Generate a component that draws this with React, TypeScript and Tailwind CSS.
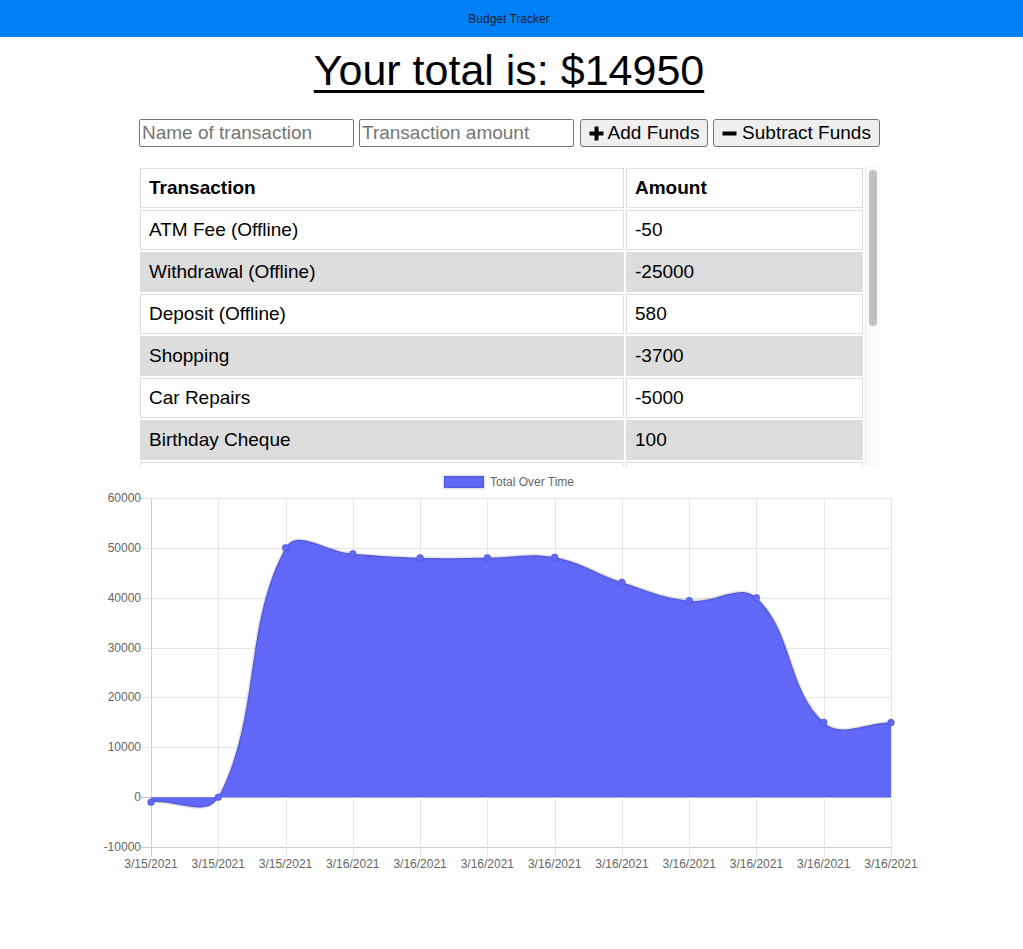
import React from "react";

type Pt = { x: number; y: number };

const values = [-1000, 0, 50000, 48800, 48000, 48020, 48120, 43120, 39420, 40000, 15000, 14950];
const labels = [
  "3/15/2021", "3/15/2021", "3/15/2021", "3/16/2021", "3/16/2021", "3/16/2021",
  "3/16/2021", "3/16/2021", "3/16/2021", "3/16/2021", "3/16/2021", "3/16/2021",
];
const LEFT = 151;
const RIGHT = 891;
const TOP = 498;
const BOTTOM = 847;
const xOf = (i: number) => LEFT + (i * (RIGHT - LEFT)) / 11;
const yOf = (v: number) => TOP + ((60000 - v) * (BOTTOM - TOP)) / 70000;

function buildPath() {
  const pts: Pt[] = values.map((v, i) => ({ x: xOf(i), y: yOf(v) }));
  const t = 0.4;
  const cps = pts.map((cur, i) => {
    const prev = pts[i - 1] || cur;
    const next = pts[i + 1] || cur;
    const d01 = Math.hypot(cur.x - prev.x, cur.y - prev.y);
    const d12 = Math.hypot(next.x - cur.x, next.y - cur.y);
    let s01 = d01 / (d01 + d12);
    let s12 = d12 / (d01 + d12);
    if (isNaN(s01)) s01 = 0;
    if (isNaN(s12)) s12 = 0;
    const fa = t * s01;
    const fb = t * s12;
    const clampX = (x: number) => Math.max(LEFT, Math.min(RIGHT, x));
    const clampY = (y: number) => Math.max(TOP, Math.min(BOTTOM, y));
    return {
      px: clampX(cur.x - fa * (next.x - prev.x)),
      py: clampY(cur.y - fa * (next.y - prev.y)),
      nx: clampX(cur.x + fb * (next.x - prev.x)),
      ny: clampY(cur.y + fb * (next.y - prev.y)),
    };
  });
  let d = `M${pts[0].x.toFixed(2)} ${pts[0].y.toFixed(2)}`;
  for (let i = 1; i < pts.length; i++) {
    d += ` C${cps[i - 1].nx.toFixed(2)} ${cps[i - 1].ny.toFixed(2)} ${cps[i].px.toFixed(2)} ${cps[i].py.toFixed(2)} ${pts[i].x.toFixed(2)} ${pts[i].y.toFixed(2)}`;
  }
  return { d, pts };
}

const { d: linePath, pts } = buildPath();
const zeroY = yOf(0);
const fillPath = `${linePath} L${RIGHT} ${zeroY} L${LEFT} ${zeroY} Z`;

const FILL = "#6167f6";

function Chart() {
  const yTicks = [60000, 50000, 40000, 30000, 20000, 10000, 0, -10000];
  return (
    <svg
      width={840}
      height={414}
      viewBox="89 466 840 414"
      className="block mx-auto"
      style={{ fontFamily: '"Liberation Sans", Arial, sans-serif' }}
    >
      {/* legend */}
      <rect x={444} y={476} width={40} height={12} fill={FILL} stroke="rgba(0,0,0,0.1)" strokeWidth={3} />
      <text x={490} y={486} fontSize={12} fill="#666">Total Over Time</text>

      {/* horizontal grid */}
      {yTicks.map((v) => (
        <line
          key={"h" + v}
          x1={LEFT - 10}
          x2={RIGHT}
          y1={Math.round(yOf(v)) + 0.5}
          y2={Math.round(yOf(v)) + 0.5}
          stroke={v === 0 ? "#bfbfbf" : v === -10000 ? "#cfcfcf" : "#e6e6e6"}
          strokeWidth={1}
        />
      ))}
      {/* vertical grid */}
      {values.map((_, i) => (
        <line
          key={"v" + i}
          x1={Math.round(xOf(i)) + 0.5}
          x2={Math.round(xOf(i)) + 0.5}
          y1={TOP}
          y2={BOTTOM + 10}
          stroke={i === 0 ? "#cfcfcf" : "#e6e6e6"}
          strokeWidth={1}
        />
      ))}

      {/* y labels */}
      {yTicks.map((v) => (
        <text key={"yl" + v} x={141} y={yOf(v) + 4} fontSize={12} fill="#666" textAnchor="end">
          {v}
        </text>
      ))}
      {/* x labels */}
      {labels.map((l, i) => (
        <text key={"xl" + i} x={xOf(i)} y={868} fontSize={12} fill="#666" textAnchor="middle">
          {l}
        </text>
      ))}

      {/* area */}
      <path d={fillPath} fill={FILL} />
      <path d={linePath} fill="none" stroke="rgba(0,0,0,0.1)" strokeWidth={3} />
      {pts.map((p, i) => (
        <circle key={"p" + i} cx={p.x} cy={p.y} r={3.5} fill={FILL} stroke="rgba(0,0,0,0.12)" strokeWidth={1} />
      ))}
    </svg>
  );
}

const rows: [string, string][] = [
  ["ATM Fee (Offline)", "-50"],
  ["Withdrawal (Offline)", "-25000"],
  ["Deposit (Offline)", "580"],
  ["Shopping", "-3700"],
  ["Car Repairs", "-5000"],
  ["Birthday Cheque", "100"],
  ["", ""],
];

function PlusIcon() {
  return (
    <svg width="15" height="15" viewBox="0 0 15 15" className="shrink-0">
      <rect x="5.5" y="0.5" width="4" height="14" fill="#000" />
      <rect x="0.5" y="5.5" width="14" height="4" fill="#000" />
    </svg>
  );
}

function MinusIcon() {
  return (
    <svg width="15" height="15" viewBox="0 0 15 15" className="shrink-0">
      <rect x="0.5" y="5.5" width="14" height="4" fill="#000" />
    </svg>
  );
}

export default function App() {
  return (
    <div
      className="min-h-[949px] bg-white text-black"
      style={{ fontFamily: '"Liberation Sans", Arial, sans-serif' }}
    >
      <div className="h-[37px] bg-[#0080f7] w-full">
        <div className="w-[1018px] h-full flex items-center justify-center text-[12px] text-[#1c1c2a]">
          Budget Tracker
        </div>
      </div>
      <div className="w-[1018px]">
        <h1 className="mt-[9px] text-center text-[43px] leading-[48px] underline decoration-[3px] underline-offset-[5px]">
          Your total is: $14950
        </h1>

        <div className="mt-[25px] mx-auto w-[742px] flex items-center pl-px">
          <input
            placeholder="Name of transaction"
            className="w-[215px] h-[28px] border border-[#767676] rounded-[2px] px-[2px] text-[19px] placeholder:text-[#757575] outline-none"
          />
          <input
            placeholder="Transaction amount"
            className="ml-[5px] w-[215px] h-[28px] border border-[#767676] rounded-[2px] px-[2px] text-[19px] placeholder:text-[#757575] outline-none"
          />
          <button className="ml-[6px] w-[128px] h-[28px] border border-[#767676] rounded-[3px] bg-[#efefef] flex items-center justify-center gap-[4px] text-[19px]">
            <PlusIcon />
            <span>Add Funds</span>
          </button>
          <button className="ml-[5px] w-[167px] h-[28px] border border-[#767676] rounded-[3px] bg-[#efefef] flex items-center justify-center gap-[5px] text-[19px]">
            <MinusIcon />
            <span>Subtract Funds</span>
          </button>
        </div>

        <div className="mt-[19px] mx-auto w-[742px] h-[300px] flex">
          <div className="flex-1 overflow-hidden">
            <table className="w-full border-separate border-spacing-[2px] text-[19px]">
              <thead>
                <tr>
                  <th className="w-[484px] h-[40px] border border-[#dddddd] bg-white text-left font-bold px-[8px]">
                    Transaction
                  </th>
                  <th className="h-[40px] border border-[#dddddd] bg-white text-left font-bold px-[8px]">Amount</th>
                </tr>
              </thead>
              <tbody>
                {rows.map(([name, amt], i) => (
                  <tr key={i}>
                    <td
                      className={
                        "h-[40px] border px-[8px] " +
                        (i % 2 === 1 ? "bg-[#dddddd] border-[#dddddd]" : "bg-white border-[#dddddd]")
                      }
                    >
                      {name}
                    </td>
                    <td
                      className={
                        "h-[40px] border px-[8px] " +
                        (i % 2 === 1 ? "bg-[#dddddd] border-[#dddddd]" : "bg-white border-[#dddddd]")
                      }
                    >
                      {amt}
                    </td>
                  </tr>
                ))}
              </tbody>
            </table>
          </div>
          <div className="w-[15px] h-full bg-[#fafafa] border-l border-[#ececec] pt-[4px] pl-[3px]">
            <div className="w-[8px] h-[156px] rounded-full bg-[#c1c1c1]" />
          </div>
        </div>

        <Chart />
      </div>
    </div>
  );
}
